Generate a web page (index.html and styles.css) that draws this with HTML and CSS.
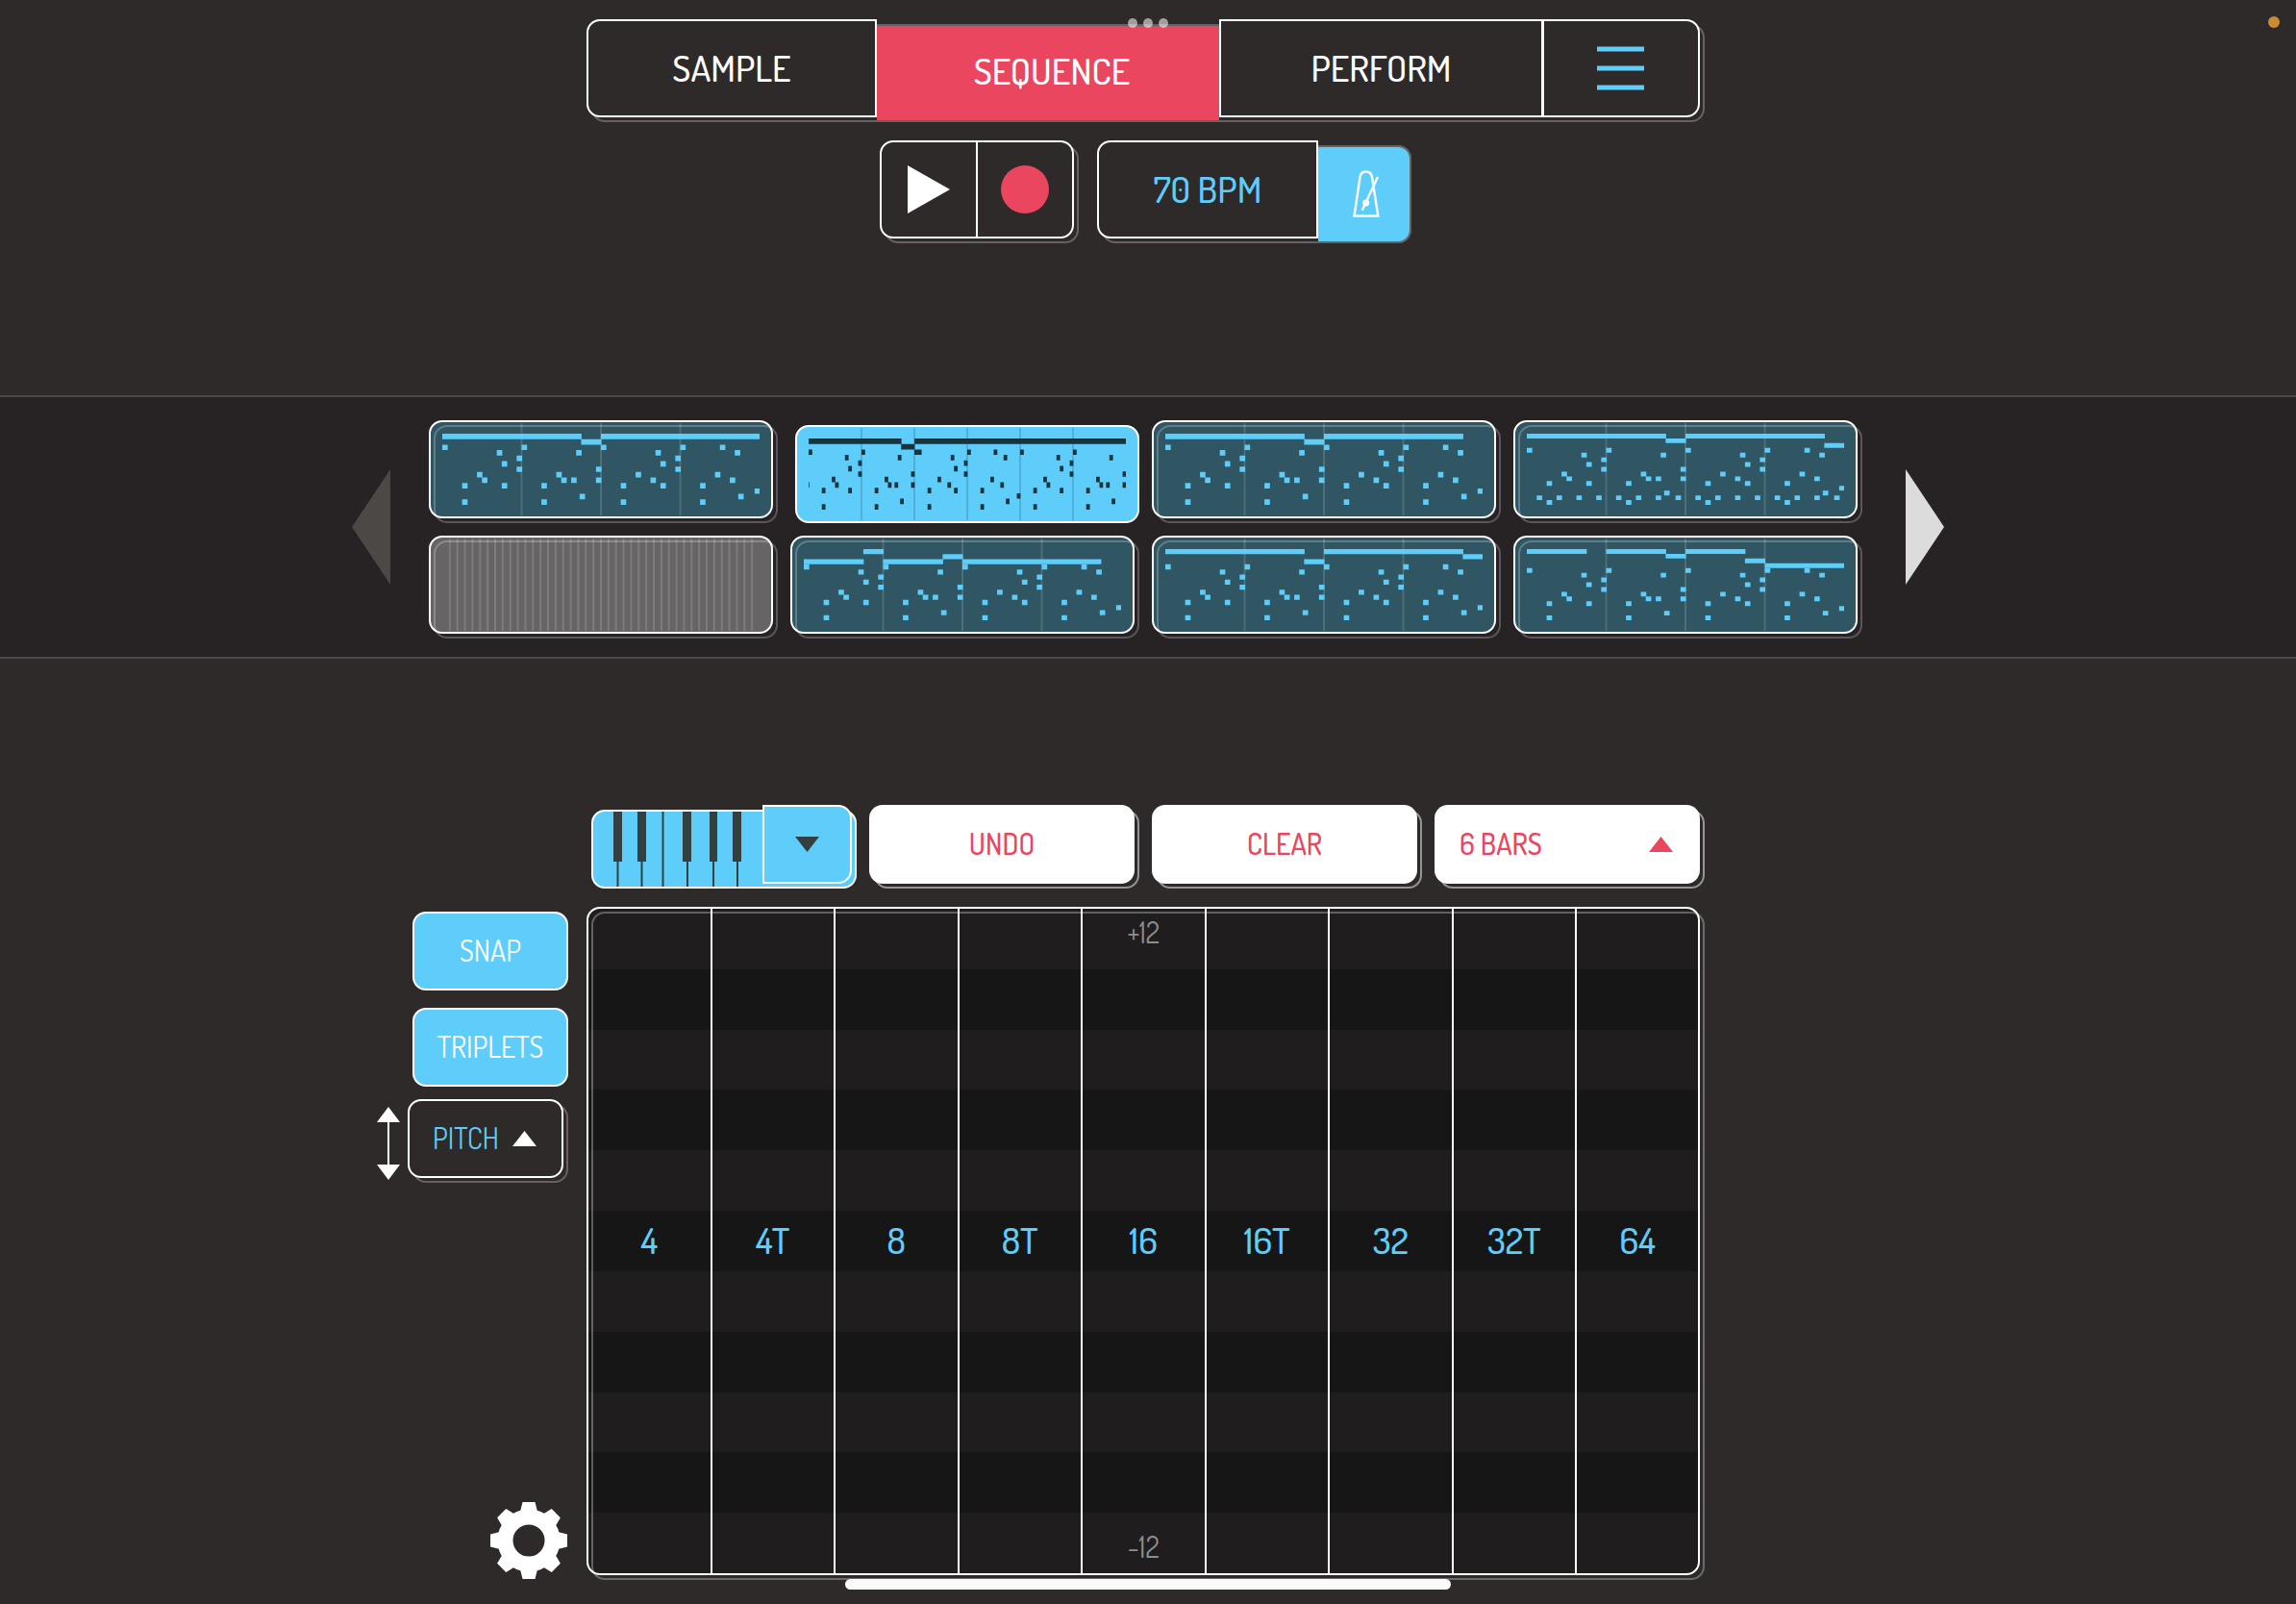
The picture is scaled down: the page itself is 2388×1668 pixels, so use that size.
FILE: index.html
```html
<!DOCTYPE html>
<html lang="en">
<head>
<meta charset="utf-8">
<meta name="viewport" content="width=device-width, initial-scale=1">
<title>Sequence</title>
<link rel="stylesheet" href="styles.css">
</head>
<body>
<svg class="defs" aria-hidden="true">
  <defs>
    <!-- one unit is a sixteenth step across and one pitch row down -->
    <path id="melody" d="M0 2.5h1.1M16 2.5h1.1M32 2.5h1.1M48 2.5h1.1M56 2.5h1.1M11 3.5h1.1M27 3.5h1.1M43 3.5h1.1M59 3.5h1.1M15 4.5h1.1M47 4.5h1.1M12 5.5h1.1M44 5.5h1.1M15 6.5h1.1M31 6.5h1.1M47 6.5h1.1M7 7.5h1.1M23 7.5h1.1M39 7.5h1.1M55 7.5h1.1M8 8.5h1.1M24 8.5h1.1M26 8.5h1.1M31 8.5h1.1M42 8.5h1.1M58 8.5h1.1M4 9.5h1.1M12 9.5h1.1M20 9.5h1.1M36 9.5h1.1M44 9.5h1.1M52 9.5h1.1M63 10.5h1.1M27.7 11.5h1.1M59.7 11.5h1.1M4 12.5h1.1M20 12.5h1.1M36 12.5h1.1M52 12.5h1.1"/>
    <path id="bars4" d="M1 0v1M2 0v1M3 0v1"/>
  </defs>
</svg>
<div class="island" aria-hidden="true"><i></i><i></i><i></i></div>
<div class="mic-light" aria-hidden="true"></div>

<header class="top">
  <nav class="group tabs" aria-label="Mode">
    <button class="seg first text tab-sample">SAMPLE</button>
    <button class="seg on tab-sequence" aria-current="page">SEQUENCE</button>
    <button class="seg text tab-perform">PERFORM</button>
    <button class="seg last tab-menu" aria-label="Menu">
      <svg width="50" height="46" viewBox="0 0 50 46"><path d="M0 3h49M0 23h49M0 43h49" stroke="#5fcdfa" stroke-width="5"/></svg>
    </button>
  </nav>
  <div class="transport">
    <div class="group">
      <button class="seg first play" aria-label="Play"><svg width="44" height="50" viewBox="0 0 44 50"><path d="M0 0L44 25L0 50z" fill="#fff"/></svg></button>
      <button class="seg last record" aria-label="Record"><svg width="50" height="50" viewBox="0 0 50 50"><circle cx="25" cy="25" r="25" fill="#ea465f"/></svg></button>
    </div>
    <div class="group">
      <button class="seg first text bpm">70 BPM</button>
      <button class="seg last metro" aria-label="Metronome" aria-pressed="true">
        <svg width="28" height="50" viewBox="0 0 28 50" fill="none" stroke="#fff" stroke-width="2.400"><path d="M1.500 47.500L7.500 7Q8.500 1.500 13.700 1.500Q19 1.500 20 7L26.300 47.500z"/><path d="M26 7L9.700 41.700"/><circle cx="13.700" cy="34" r="3.500" fill="#fff" stroke="none"/></svg>
      </button>
    </div>
  </div>
</header>

<section class="band" aria-label="Patterns">
  <button class="page-arrow" aria-label="Previous patterns" disabled><svg width="40" height="120" viewBox="0 0 40 120"><path d="M40 0v120L0 60z" fill="#4c4846"/></svg></button>
  <div class="patterns">
    <button class="pattern" aria-label="Pattern 1">
      <svg class="bars" viewBox="0 0 4 1" preserveAspectRatio="none"><use href="#bars4"/></svg>
      <svg class="notes" viewBox="0 0 64 13" preserveAspectRatio="none"><path d="M0 .5h28.100M28 1.500h4.100M32 .5h32"/><use href="#melody"/></svg>
    </button>
    <button class="pattern chosen" aria-label="Pattern 2" aria-pressed="true">
      <svg class="bars" viewBox="0 0 6 1" preserveAspectRatio="none"><path d="M1 0v1M2 0v1M3 0v1M4 0v1M5 0v1"/></svg>
      <svg class="notes" viewBox="0 0 96 13" preserveAspectRatio="none"><path d="M0 .5h28.100M28 1.500h4.100M32 .5h64M33 2.500h1.200M64 2.500h1.100M80 2.500h1.100M75 3.500h1.100M91 3.500h1.100M79 4.500h1.100M76 5.500h1.100M79 6.500h1.100M95 6.500h1M71 7.500h1.100M87 7.500h1.100M0 8.500h.2M72 8.500h1.100M88 8.500h1.100M90 8.500h1.100M95 8.500h1M68 9.500h1.100M76 9.500h1.100M84 9.500h1.100M91.700 11.500h1.100M68 12.500h1.100M84 12.500h1.100"/><use href="#melody"/></svg>
    </button>
    <button class="pattern" aria-label="Pattern 3">
      <svg class="bars" viewBox="0 0 4 1" preserveAspectRatio="none"><use href="#bars4"/></svg>
      <svg class="notes" viewBox="0 0 64 13" preserveAspectRatio="none"><path d="M0 .5h28.100M28 1.500h4.100M32 .5h28.100"/><use href="#melody"/></svg>
    </button>
    <button class="pattern" aria-label="Pattern 4">
      <svg class="bars" viewBox="0 0 4 1" preserveAspectRatio="none"><use href="#bars4"/></svg>
      <svg class="notes" viewBox="0 0 64 15" preserveAspectRatio="none"><path d="M0 .5h28.100M28 1.500h4.100M32 .5h28.100M60 2.500h4M2 13.500h1.100M6 13.500h1.100M10 13.500h1.100M14 13.500h1.100M18 13.500h1.100M22 13.500h1.100M26 13.500h1.100M30 13.500h1.100M34 13.500h1.100M38 13.500h1.100M42 13.500h1.100M46 13.500h1.100M50 13.500h1.100M54 13.500h1.100M58 13.500h1.100M62 13.500h1.100"/><svg x="0" y="1" width="64" height="11" viewBox="0 0 64 11"><use href="#melody"/></svg><path d="M27.700 12.500h1.100M59.700 12.500h1.100M4 14.500h1.100M20 14.500h1.100M36 14.500h1.100M52 14.500h1.100"/></svg>
    </button>
    <button class="pattern empty" aria-label="Pattern 5, empty">
      <svg class="bars" viewBox="0 0 42 1" preserveAspectRatio="none"><path d="M1 0v1M2 0v1M3 0v1M4 0v1M5 0v1M6 0v1M7 0v1M8 0v1M9 0v1M10 0v1M11 0v1M12 0v1M13 0v1M14 0v1M15 0v1M16 0v1M17 0v1M18 0v1M19 0v1M20 0v1M21 0v1M22 0v1M23 0v1M24 0v1M25 0v1M26 0v1M27 0v1M28 0v1M29 0v1M30 0v1M31 0v1M32 0v1M33 0v1M34 0v1M35 0v1M36 0v1M37 0v1M38 0v1M39 0v1M40 0v1M41 0v1"/></svg>
    </button>
    <button class="pattern" aria-label="Pattern 6">
      <svg class="bars" viewBox="0 0 4 1" preserveAspectRatio="none"><use href="#bars4"/></svg>
      <svg class="notes" viewBox="0 0 64 14" preserveAspectRatio="none"><path d="M0 2.500h12.100M12 .5h4.100M16 2.500h12.100M28 1.500h4.100M32 2.500h28"/><use href="#melody" y="1"/></svg>
    </button>
    <button class="pattern" aria-label="Pattern 7">
      <svg class="bars" viewBox="0 0 4 1" preserveAspectRatio="none"><use href="#bars4"/></svg>
      <svg class="notes" viewBox="0 0 64 14" preserveAspectRatio="none"><path d="M0 .5h28.100M28 2.500h4.100M32 .5h28.100M60 1.500h4"/><use href="#melody" y="1"/></svg>
    </button>
    <button class="pattern" aria-label="Pattern 8">
      <svg class="bars" viewBox="0 0 4 1" preserveAspectRatio="none"><use href="#bars4"/></svg>
      <svg class="notes" viewBox="0 0 64 15" preserveAspectRatio="none"><path d="M0 .5h12.100M16 .5h12.100M28 1.500h4.100M32 .5h12.100M44 2.500h4.100M48 3.500h16"/><use href="#melody" y="2"/></svg>
    </button>
  </div>
  <button class="page-arrow" aria-label="Next patterns"><svg width="40" height="120" viewBox="0 0 40 120"><path d="M0 0v120L40 60z" fill="#dcdcdc"/></svg></button>
</section>

<main class="editor">
  <div class="tools">
    <div class="keys-group">
      <button class="keys" aria-label="Keyboard input" aria-pressed="true">
        <svg width="176" height="78" viewBox="0 0 176 78" fill="#33403f"><path d="M21 0h9v52h-9zM46 0h9v52h-9zM93 0h9v52h-9zM121 0h8v52h-8zM145 0h9v52h-9z"/><path d="M24.500 52h2v26h-2zM49.500 52h2v26h-2zM71.500 0h2v78h-2zM97 52h2v26h-2zM124 52h2v26h-2zM149 52h2v26h-2z"/></svg>
      </button>
      <button class="keys-more" aria-label="Choose input"><svg width="25" height="16" viewBox="0 0 25 16"><path d="M0 0h25L12.500 16z" fill="#33403f"/></svg></button>
    </div>
    <button class="solid text">UNDO</button>
    <button class="solid text">CLEAR</button>
    <div class="solid picker">
      <select class="text" aria-label="Length"><option>6 BARS</option><option>4 BARS</option></select>
      <svg width="25" height="16" viewBox="0 0 25 16"><path d="M0 16h25L12.500 0z" fill="#ea465f"/></svg>
    </div>
  </div>
  <aside class="side">
    <button class="side-button text lit">SNAP</button>
    <button class="side-button text lit">TRIPLETS</button>
    <div class="pitch-row">
      <svg class="axis" width="24" height="76" viewBox="0 0 24 76" fill="#fff" aria-hidden="true"><path d="M12 0L24 16H0zM0 60H24L12 76zM11 10h2v56h-2z"/></svg>
      <div class="side-button picker pitch">
        <select class="text" aria-label="Vertical axis"><option>PITCH</option><option>VOLUME</option></select>
        <svg width="25" height="16" viewBox="0 0 25 16"><path d="M0 16h25L12.500 0z" fill="#fff"/></svg>
      </div>
    </div>
    <button class="settings" aria-label="Settings">
      <svg width="80" height="80" viewBox="-40 -40 80 80" fill="#fff">
        <circle r="24.500" fill="none" stroke="#fff" stroke-width="16"/>
        <g id="teeth"><path id="tooth" d="M-9 -30L-6.500 -40H6.500L9 -30z"/><use href="#tooth" transform="rotate(90)"/><use href="#tooth" transform="rotate(180)"/><use href="#tooth" transform="rotate(270)"/></g>
        <use href="#teeth" transform="rotate(45)"/>
      </svg>
    </button>
  </aside>
  <div class="panel">
    <button class="column">4</button>
    <button class="column">4T</button>
    <button class="column">8</button>
    <button class="column">8T</button>
    <button class="column scaled"><span>+12</span>16<span>-12</span></button>
    <button class="column">16T</button>
    <button class="column">32</button>
    <button class="column">32T</button>
    <button class="column">64</button>
  </div>
</main>
<div class="home-bar" aria-hidden="true"></div>
</body>
</html>
```

FILE: styles.css
```css
:root {
  --ground: #2e2a2a;
  --blue: #5fcdfa;
  --red: #ea465f;
  --ghost: #666262;
  --radius: 14px;
}

* { box-sizing: border-box; }

body {
  position: relative;
  display: flex;
  flex-direction: column;
  min-height: 100vh;
  margin: 0;
  background: var(--ground);
  color: #fff;
  font: 30px/32px "Dosis", "Roboto", sans-serif;
}

button, select {
  margin: 0;
  padding: 0;
  border: 0;
  border-radius: 0;
  background: none;
  color: inherit;
  font: inherit;
  appearance: none;
}

button { display: flex; align-items: center; justify-content: center; }
svg { display: block; flex: none; }
.defs { position: absolute; width: 0; height: 0; }
.text { padding-bottom: 3px; }

/* system indicators that float over the app */
.island {
  position: absolute;
  z-index: 3;
  top: 19px;
  left: 50%;
  display: flex;
  gap: 6px;
  transform: translateX(-50%);
}
.island i { width: 10px; height: 10px; border-radius: 50%; background: rgba(255, 255, 255, .55); }
.mic-light {
  position: absolute;
  top: 17px;
  right: 17px;
  width: 12px;
  height: 12px;
  border-radius: 50%;
  background: #cb8d33;
}
.home-bar {
  position: absolute;
  bottom: 15px;
  left: 50%;
  width: 630px;
  height: 11px;
  border-radius: 6px;
  background: #fbfbfb;
  transform: translateX(-50%);
}

/* top bars */
.top {
  display: flex;
  flex-direction: column;
  align-items: center;
  gap: 24px;
  padding: 20px 10px 0 0;
  font-size: 38px;
  font-weight: 500;
}
.group { position: relative; display: flex; height: 102px; }
.group::before,
.pattern::after,
.pitch::before,
.solid::before,
.panel::after {
  content: "";
  position: absolute;
  inset: 5px -5px -5px 5px;
  border: 2px solid var(--ghost);
  border-radius: var(--radius);
  pointer-events: none;
}
.seg { position: relative; border: 2px solid #fff; background: var(--ground); }
.seg + .seg { border-left-width: 0; }
.first { border-radius: var(--radius) 0 0 var(--radius); }
.last { border-radius: 0 var(--radius) var(--radius) 0; }
.tabs { width: 1158px; }
.tab-sample { width: 302px; }
.seg.on {
  width: 356px;
  margin: 5px 0 -5px;
  padding: 0 0 7px 8px;
  border: solid var(--ghost);
  border-width: 2px 0;
  background: var(--red);
}
.seg.tab-perform { width: 337px; border-left-width: 2px; }
.seg.tab-menu { flex: 1; border-left-width: 1px; }
.transport { display: flex; gap: 24px; }
.play { width: 102px; }
.record { width: 100px; }
.bpm { width: 230px; color: var(--blue); }
.seg.metro {
  width: 97px;
  margin: 5px -5px -5px 0;
  padding-left: 4px;
  border: 2px solid var(--ghost);
  border-left: 0;
  background: var(--blue);
}

/* pattern browser */
.band {
  display: flex;
  align-items: center;
  justify-content: center;
  gap: 40px;
  margin-top: 163px;
  padding: 24px 0;
  border: solid #4b4a4a;
  border-width: 2px 0;
  background: #272324;
}
.patterns {
  display: grid;
  grid-template-columns: repeat(4, 358px);
  gap: 18px;
  padding-right: 10px;
}
.pattern {
  position: relative;
  display: grid;
  height: 102px;
  padding: 1px 12px;
  border: 2px solid #fff;
  border-radius: var(--radius);
  background: #2f5662;
}
.pattern::after { inset: 3px -7px -7px 3px; border-color: rgba(255, 255, 255, .24); }
.pattern > svg { grid-area: 1 / 1; }
.bars { width: 330px; height: 96px; fill: none; stroke: rgba(255, 255, 255, .15); stroke-width: 2px; }
.bars path { vector-effect: non-scaling-stroke; }
#bars4 { vector-effect: non-scaling-stroke; }
.notes { width: 330px; height: 74px; stroke: var(--blue); stroke-width: 1; fill: none; }
.chosen { margin: 5px -5px -5px 5px; background: var(--blue); }
.chosen::after { display: none; }
.chosen .notes { stroke: #17333e; }
.chosen .bars { stroke: rgba(0, 60, 90, .2); }
.empty { background: #676465; }

/* editor */
.editor {
  flex: 1;
  display: grid;
  grid-template: auto 1fr / 1fr 1158px 1fr;
  gap: 24px;
  margin-top: 152px;
  padding: 0 10px 30px 0;
}
.tools {
  grid-area: 1 / 2;
  display: grid;
  grid-template-columns: repeat(4, 1fr);
  gap: 18px;
  font-weight: 500;
}
.tools > * { height: 82px; }
.keys-group { display: grid; grid-template-columns: 183px 93px; }
.keys {
  justify-content: flex-start;
  height: 82px;
  margin: 5px -98px -5px 5px;
  border: 2px solid #fff;
  border-radius: var(--radius);
  background: var(--blue);
}
.keys-more {
  position: relative;
  height: 82px;
  border: 2px solid #fff;
  border-radius: 0 var(--radius) var(--radius) 0;
  background: var(--blue);
}
.solid {
  position: relative;
  z-index: 0;
  border-radius: var(--radius);
  color: var(--red);
}
.solid::before { z-index: -2; border-color: #949594; }
.solid::after {
  content: "";
  position: absolute;
  z-index: -1;
  inset: 0;
  border-radius: var(--radius);
  background: #fff;
}
.picker { display: grid; align-items: center; }
.picker > * { grid-area: 1 / 1; }
.picker select { width: 100%; height: 100%; padding: 0 26px 3px; }
.picker svg { justify-self: end; margin-right: 28px; pointer-events: none; }

.side { grid-area: 2 / 1; display: flex; flex-direction: column; align-items: flex-end; gap: 18px; }
.side-button { position: relative; width: 162px; height: 82px; border: 2px solid #fff; border-radius: var(--radius); }
.lit { margin: 5px -5px -5px 5px; background: var(--blue); }
.pitch-row { position: relative; z-index: 0; display: flex; align-items: flex-start; gap: 8px; }
.axis { margin-top: 8px; }
.pitch { background: var(--ground); color: var(--blue); }
.pitch::before { z-index: -1; inset: 3px -7px -7px 3px; }
.picker.pitch select { padding: 0 24px 3px; }
.pitch svg { margin-right: 26px; }
.settings { margin: auto -4px -4px 0; }

.panel {
  position: relative;
  grid-area: 2 / 2;
  display: grid;
  grid-template-columns: repeat(8, 1fr) 126px;
  border: 2px solid #fff;
  border-radius: var(--radius);
  background: repeating-linear-gradient(#1f1d1e 0 calc(100% / 11), #171616 calc(100% / 11) calc(200% / 11));
  color: var(--blue);
  font-size: 38px;
  font-weight: 500;
}
.panel::after { inset: 3px -7px -7px 3px; border-color: rgba(255, 255, 255, .3); }
.column { padding-bottom: 4px; }
.column:not(:last-child) { border-right: 2px solid #fff; }
.column.scaled { flex-direction: column; justify-content: space-between; padding: 8px 0 12px; }
.scaled span { color: #8f8e8e; font-size: 30px; font-weight: 400; }
```
